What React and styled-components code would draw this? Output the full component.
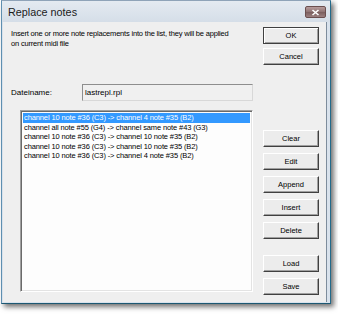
import React from 'react';
import styled, { createGlobalStyle } from 'styled-components';

const Global = createGlobalStyle`
  html, body { margin: 0; padding: 0; background: #ffffff; }
  body { font-family: "Liberation Sans", Arial, sans-serif; }
`;

const Page = styled.div`
  padding: 0 0 0 1px;
  width: 338px;
  height: 314px;
  box-sizing: border-box;
`;

const Window = styled.div`
  width: 330px;
  height: 304px;
  box-sizing: border-box;
  display: flex;
  flex-direction: column;
  border: 1px solid;
  border-color: #8fa3b8 #236a8a #1d5872 #5f8fb0;
  background: #d9e2ec;
  box-shadow: 3px 3px 5px rgba(0, 0, 0, 0.55);
`;

const TitleBar = styled.div`
  height: 21px;
  flex: none;
  display: flex;
  align-items: center;
  justify-content: space-between;
  padding: 0 4px 0 6px;
  background: linear-gradient(#e4eaf1, #d5dee8);
`;

const Title = styled.span`
  font-size: 10.8px;
  color: #1a1a1a;
`;

const CloseButton = styled.div`
  width: 21px;
  height: 12px;
  box-sizing: border-box;
  border: 1px solid #6b4f4f;
  border-radius: 2px;
  background: linear-gradient(#b89c9c, #8e7272 50%, #7a5e5e 51%, #9c8080);
  display: flex;
  align-items: center;
  justify-content: center;
  margin-top: 1px;
`;

const Client = styled.div`
  flex: 1;
  margin: 0 3px 1px 1px;
  border-right: 1px solid #7d8c9c;
  background: #efefef;
  display: flex;
  gap: 10px;
  padding: 5px 6px 0 8px;
`;

const Main = styled.div`
  width: 242px;
  display: flex;
  flex-direction: column;
`;

const Text = styled.div`
  font-size: 7.5px;
  letter-spacing: -0.18px;
  line-height: 10px;
  white-space: nowrap;
  color: #000;
  margin-top: 2px;
`;

const FileRow = styled.div`
  display: flex;
  align-items: center;
  margin-top: 35px;
`;

const Label = styled.span`
  width: 71px;
  font-size: 8px;
  color: #000;
`;

const FileField = styled.div`
  width: 171px;
  height: 17px;
  box-sizing: border-box;
  border: 1px solid;
  border-color: #8e8e8e #d8d8d8 #d8d8d8 #8e8e8e;
  background: #f0f0f0;
  font-size: 8px;
  color: #000;
  display: flex;
  align-items: center;
  padding-left: 2px;
`;

const List = styled.div`
  margin: 9px 0 0 9px;
  width: 233px;
  height: 182px;
  box-sizing: border-box;
  border: 1px solid;
  border-color: #a0a0a0 #ffffff #ffffff #a0a0a0;
  box-shadow: inset 1px 1px #6a6a6a, inset -1px -1px #e3e3e3;
  background: #fdfdfd;
  padding: 2px;
`;

const Item = styled.div`
  font-size: 7.5px;
  letter-spacing: -0.12px;
  line-height: 9.5px;
  height: 9.5px;
  white-space: nowrap;
  padding-left: 1px;
  color: ${(p) => (p.$selected ? '#ffffff' : '#000')};
  background: ${(p) => (p.$selected ? '#3399ff' : 'transparent')};
`;

const Side = styled.div`
  width: 56px;
  display: flex;
  flex-direction: column;
`;

const Button = styled.div`
  height: 17px;
  flex: none;
  box-sizing: border-box;
  border: 1px solid;
  border-color: ${(p) => (p.$default ? '#404040' : '#ffffff #404040 #404040 #ffffff')};
  box-shadow: ${(p) =>
    p.$default
      ? 'inset 1px 1px #ffffff, inset -1px -1px #a0a0a0'
      : 'inset -1px -1px #a0a0a0'};
  background: #ececec;
  font-size: 7.5px;
  color: #000;
  display: flex;
  align-items: center;
  justify-content: center;
  margin-top: ${(p) => p.$gap ?? 6}px;
`;

const items = [
  'channel 10 note #36 (C3) -> channel 4 note #35 (B2)',
  'channel all note #55 (G4) -> channel same note #43 (G3)',
  'channel 10 note #36 (C3) -> channel 10 note #35 (B2)',
  'channel 10 note #36 (C3) -> channel 10 note #35 (B2)',
  'channel 10 note #36 (C3) -> channel 4 note #35 (B2)',
];

export default function App() {
  return (
    <Page>
      <Global />
      <Window>
        <TitleBar>
          <Title>Replace notes</Title>
          <CloseButton>
            <svg width="9" height="7" viewBox="0 0 9 7">
              <path d="M1.5 1 L7.5 6 M7.5 1 L1.5 6" stroke="#ffffff" strokeWidth="1.6" />
            </svg>
          </CloseButton>
        </TitleBar>
        <Client>
          <Main>
            <Text>
              Insert one or more note replacements into the list, they will be applied
              <br />
              on current midi file
            </Text>
            <FileRow>
              <Label>Dateiname:</Label>
              <FileField>lastrepl.rpl</FileField>
            </FileRow>
            <List>
              {items.map((t, i) => (
                <Item key={i} $selected={i === 0}>
                  {t}
                </Item>
              ))}
            </List>
          </Main>
          <Side>
            <Button $default $gap={0}>OK</Button>
            <Button $gap={4}>Cancel</Button>
            <Button $gap={65}>Clear</Button>
            <Button>Edit</Button>
            <Button>Append</Button>
            <Button>Insert</Button>
            <Button>Delete</Button>
            <Button $gap={16}>Load</Button>
            <Button>Save</Button>
          </Side>
        </Client>
      </Window>
    </Page>
  );
}
